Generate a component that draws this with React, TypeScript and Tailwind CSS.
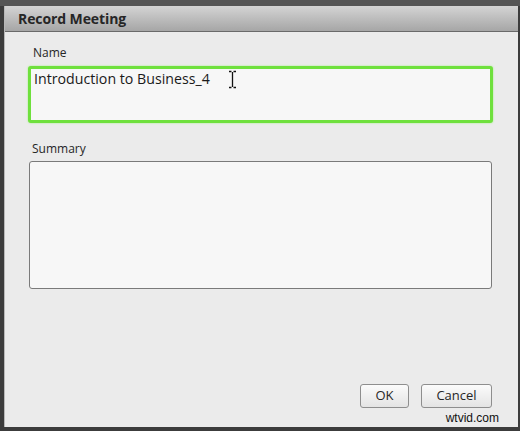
import React from "react";

export default function App() {
  return (
    <div
      className="w-[520px] h-[431px] bg-[#3c3c3c] flex flex-col overflow-hidden"
      style={{ fontFamily: '"Open Sans", "Noto Sans", sans-serif' }}
    >
      <div className="h-[6px] bg-[#555555] shrink-0" />
      <div className="flex-1 flex flex-col ml-[4px] mr-[2px] mb-[4px] border-l border-[#b8b8b8] bg-[#ebebeb]">
        <div className="h-[26px] shrink-0 bg-gradient-to-b from-[#d4d4d4] to-[#a6a6a6] border-b border-[#6a6a6a] flex items-center pl-[13px]">
          <span className="text-[14px] font-bold text-[#262626] tracking-[-0.1px]">Record Meeting</span>
        </div>
        <div className="flex-1 flex flex-col pl-[23px] pr-[25px] pt-[13px]">
          <div className="text-[12px] text-[#262626] pl-[5px] leading-[16px]">Name</div>
          <div className="relative mt-[5px] h-[57px] rounded-[3px] border-[3px] border-[#6fe03d] bg-[#f7f7f7] shadow-[0_0_2px_#9ef07a] pl-[3px]">
            <span className="block text-[14.2px] text-[#1a1a1a] leading-[18px] mt-[1px]">Introduction to Business_4</span>
            <svg className="absolute left-[197px] top-[1px]" width="9" height="19" viewBox="0 0 9 19">
              <path d="M1 1.5h2.5M5.5 1.5H8M4.5 2v15M1 17.5h2.5M5.5 17.5H8" stroke="#111" strokeWidth="1.3" fill="none" />
            </svg>
          </div>
          <div className="text-[12px] text-[#262626] pl-[4px] mt-[18px] leading-[16px]">Summary</div>
          <div className="mt-[4px] h-[128px] mx-[1px] rounded-[3px] border border-[#7a7a7a] bg-[#f7f7f7]" />
          <div className="flex-1" />
          <div className="flex justify-end gap-[12px] pr-[1px]">
            <button className="w-[49px] h-[24px] rounded-[3px] border border-[#8e8e8e] bg-gradient-to-b from-[#fbfbfb] to-[#e4e4e4] text-[13px] text-[#262626]">
              OK
            </button>
            <button className="w-[71px] h-[24px] rounded-[3px] border border-[#8e8e8e] bg-gradient-to-b from-[#fbfbfb] to-[#e4e4e4] text-[13px] text-[#262626]">
              Cancel
            </button>
          </div>
          <div className="flex justify-end mt-[2px] mb-[1px] h-[16px]">
            <span
              className="text-[12px] text-[#111] leading-[16px] mr-[-6px]"
              style={{ fontFamily: '"Liberation Sans", Arial, sans-serif' }}
            >
              wtvid.com
            </span>
          </div>
        </div>
      </div>
    </div>
  );
}
